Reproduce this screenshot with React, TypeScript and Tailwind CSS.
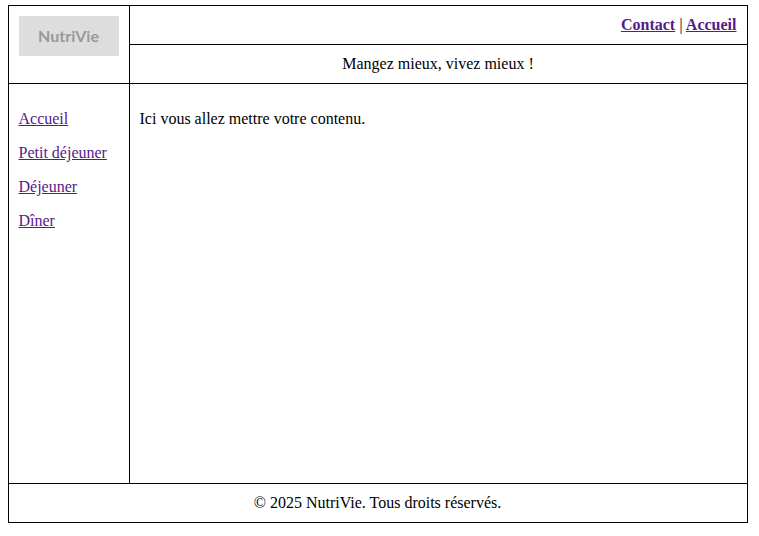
const link = "text-[#551a8b] underline";

export default function App() {
  return (
    <div className="h-[536px] w-[759px] bg-white pl-2 pt-[5px] text-base leading-[18px] text-black font-['Liberation_Serif','Times_New_Roman',serif]">
      <div className="flex h-[518px] w-[740px] flex-col border border-black">
        <header className="flex h-[78px] border-b border-black">
          <div className="w-[121px] border-r border-black p-[10px]">
            <div className="flex h-10 w-[100px] items-center justify-center bg-[#dddddd] pb-px pr-px font-[Lato,sans-serif] text-base font-bold text-[#999999]">
              NutriVie
            </div>
          </div>
          <div className="flex flex-1 flex-col">
            <nav className="h-[39px] border-b border-black p-[10px] pr-[10.5px] text-right font-bold">
              <a href="#" className={link}>Contact</a>
              <span className="text-[#555555]"> | </span>
              <a href="#" className={link}>Accueil</a>
            </nav>
            <p className="py-[10px] pl-[9px] pr-[10px] text-center">Mangez mieux, vivez mieux !</p>
          </div>
        </header>
        <div className="flex h-[400px] border-b border-black">
          <aside className="flex w-[121px] flex-col items-start gap-4 border-r border-black pl-[9.5px] pt-[26px]">
            <a href="#" className={link}>Accueil</a>
            <a href="#" className={link}>Petit déjeuner</a>
            <a href="#" className={link}>Déjeuner</a>
            <a href="#" className={link}>Dîner</a>
          </aside>
          <main className="flex-1 pl-[9.5px] pt-[26px]">Ici vous allez mettre votre contenu.</main>
        </div>
        <footer className="py-[10px] pl-[9px] pr-[10px] text-center">© 2025 NutriVie. Tous droits réservés.</footer>
      </div>
    </div>
  );
}
